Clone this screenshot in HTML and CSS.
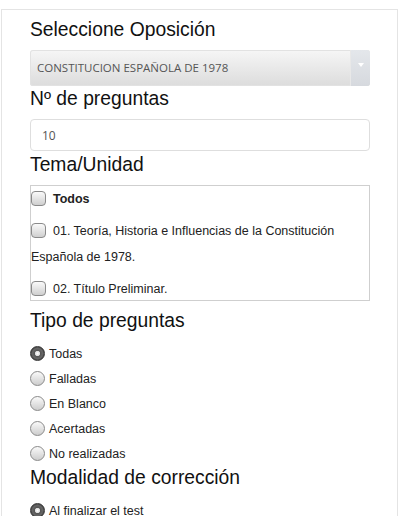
FILE: index.html
```html
<!DOCTYPE html>
<html lang="es">
<head>
<meta charset="utf-8">
<title>Test</title>
<link rel="stylesheet" href="styles.css">
</head>
<body>
<div class="card">
  <h2 class="heading">Seleccione Oposición</h2>
  <div class="select">
    <span class="select-text">CONSTITUCION ESPAÑOLA DE 1978</span>
    <span class="select-arrow"><span class="tri"></span></span>
  </div>
  <h2 class="heading">Nº de preguntas</h2>
  <div class="input"><span class="input-text">10</span></div>
  <h2 class="heading">Tema/Unidad</h2>
  <div class="list">
    <label class="item"><span class="check"></span><b>Todos</b></label>
    <label class="item"><span class="check"></span>01. Teoría, Historia e Influencias de la Constitución Española de 1978.</label>
    <label class="item"><span class="check"></span>02. Título Preliminar.</label>
  </div>
  <h2 class="heading">Tipo de preguntas</h2>
  <div class="radios">
    <label class="radio-row"><span class="radio on"></span>Todas</label>
    <label class="radio-row"><span class="radio"></span>Falladas</label>
    <label class="radio-row"><span class="radio"></span>En Blanco</label>
    <label class="radio-row"><span class="radio"></span>Acertadas</label>
    <label class="radio-row"><span class="radio"></span>No realizadas</label>
  </div>
  <h2 class="heading">Modalidad de corrección</h2>
  <div class="radios">
    <label class="radio-row"><span class="radio on"></span>Al finalizar el test</label>
  </div>
</div>
</body>
</html>
```
FILE: styles.css
```css
html, body {
  margin: 0;
  padding: 0;
  background: #fff;
}
body {
  font-family: "Liberation Sans", Arial, Helvetica, sans-serif;
  color: #222;
  height: 516px;
  overflow: hidden;
}
.card {
  margin: 9px 2px 0 1px;
  border: 1px solid #e4e4e4;
  border-bottom: none;
  padding: 8px 27px 0 28px;
  height: 520px;
}
.heading {
  margin: 0 0 8px;
  font-size: 19.3px;
  line-height: 24px;
  font-weight: normal;
  color: #111;
}
.select {
  display: flex;
  height: 36px;
  border-radius: 3px;
  background: linear-gradient(#f6f6f6, #dcdcdc);
  box-shadow: inset 0 0 0 1px #e2e2e2;
  margin-bottom: 1px;
  overflow: hidden;
}
.select-text {
  flex: 1;
  padding-left: 7px;
  font-family: "Open Sans", sans-serif;
  font-size: 11.5px;
  line-height: 36px;
  color: #555;
}
.select-arrow {
  width: 20px;
  background: linear-gradient(#e4e7eb, #d6d9de);
  border-left: 1px solid #e8e8e8;
  display: flex;
  justify-content: center;
  padding-top: 13px;
  box-sizing: border-box;
}
.tri {
  width: 0;
  height: 0;
  border-left: 3px solid transparent;
  border-right: 3px solid transparent;
  border-top: 4px solid #fff;
}
.input {
  height: 32px;
  box-sizing: border-box;
  border: 1px solid #dedede;
  border-radius: 4px;
  margin-bottom: 2px;
  padding-left: 11px;
  display: flex;
  align-items: center;
}
.input-text {
  font-family: "Open Sans", sans-serif;
  font-size: 12px;
  color: #555;
}
.list {
  height: 116px;
  box-sizing: border-box;
  border: 1px solid #cfcfcf;
  overflow: hidden;
  margin-bottom: 8px;
  font-size: 12.5px;
  line-height: 26px;
  color: #222;
}
.item {
  display: block;
  margin-bottom: 6px;
}
.item b {
  font-weight: bold;
}
.check {
  display: inline-block;
  width: 15px;
  height: 15px;
  box-sizing: border-box;
  border: 1px solid #8a8a8a;
  border-radius: 4px;
  background: linear-gradient(#fafafa, #cfcfcf);
  vertical-align: -3px;
  margin-right: 7px;
}
.radio-row {
  display: flex;
  align-items: center;
  height: 25px;
  font-size: 12.5px;
  color: #222;
}
.radio {
  width: 15px;
  height: 15px;
  box-sizing: border-box;
  border-radius: 50%;
  border: 1px solid #8a8a8a;
  background: linear-gradient(#fafafa, #cdcdcd);
  margin-right: 4px;
  flex-shrink: 0;
}
.radio.on {
  border-color: #333;
  background: radial-gradient(circle, #fff 0, #ddd 2.2px, #555 3px, #666 5px, #444 7px);
}
```
